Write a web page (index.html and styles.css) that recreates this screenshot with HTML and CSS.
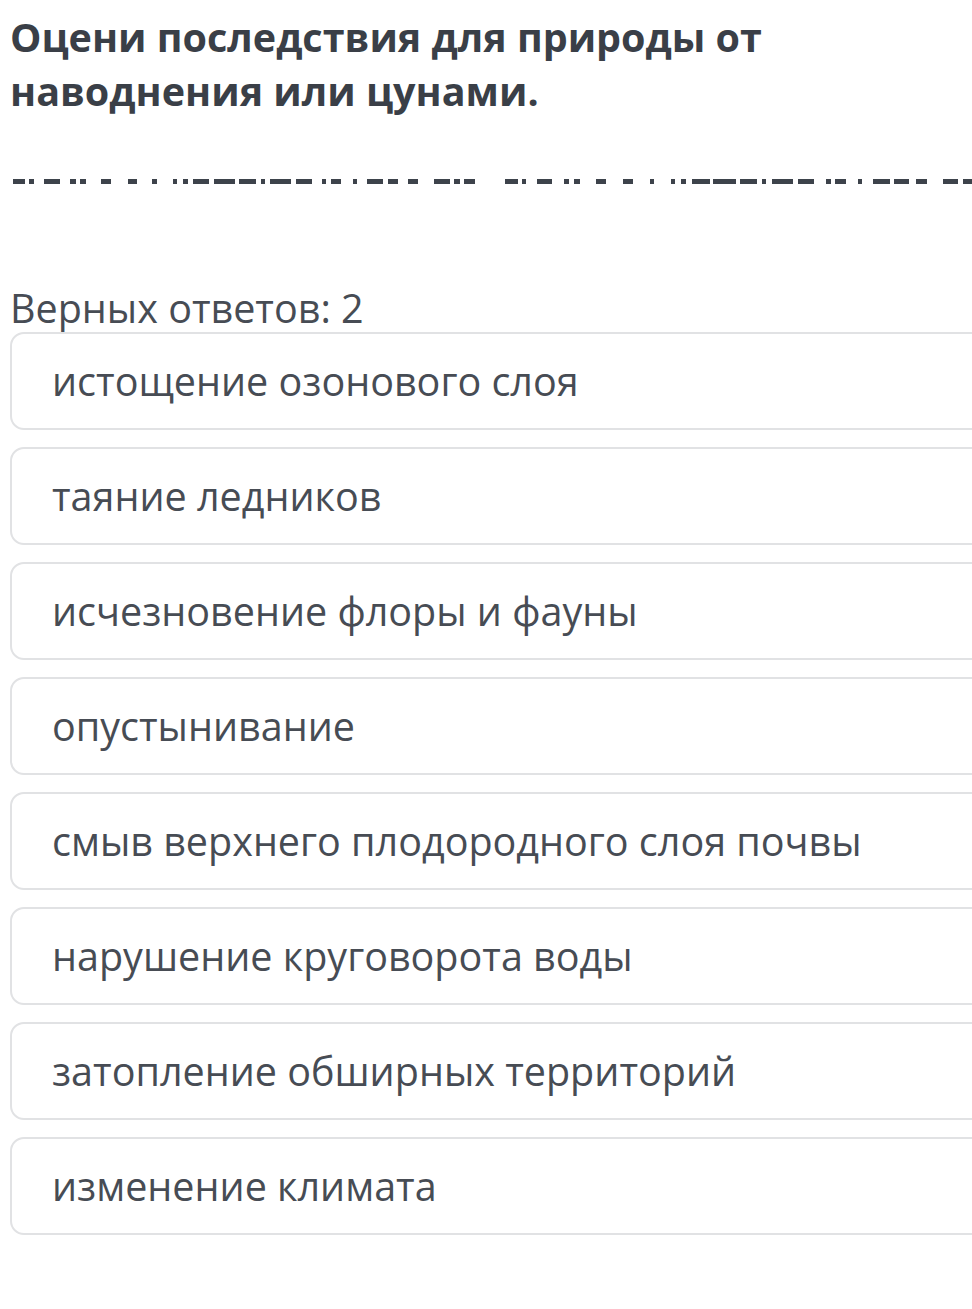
FILE: index.html
```html
<!DOCTYPE html>
<html>
<head>
  <title>Вопрос</title>
  <link rel="stylesheet" href="styles.css">
</head>
<body>
  <div id="question">
    <h1 class="title">Оцени последствия для природы от наводнения или цунами.</h1>

    <div class="blanks">
      <svg width="972" height="8" viewBox="0 0 972 8">
        <g fill="#3d434b">
          <rect x="13" y="1" width="12" height="5"/><rect x="29" y="1" width="5" height="5"/>
          <rect x="44" y="1" width="16" height="5"/><rect x="70" y="1" width="6" height="5"/>
          <rect x="80" y="1" width="6" height="5"/><rect x="101" y="1" width="10" height="5"/>
          <rect x="128" y="1" width="9" height="5"/><rect x="152" y="1" width="5" height="5"/>
          <rect x="173" y="1" width="4" height="5"/><rect x="183" y="1" width="5" height="5"/>
          <rect x="193" y="1" width="16" height="5"/><rect x="214" y="1" width="21" height="5"/>
          <rect x="239" y="1" width="17" height="5"/><rect x="261" y="1" width="4" height="5"/>
          <rect x="270" y="1" width="21" height="5"/><rect x="296" y="1" width="16" height="5"/>
          <rect x="322" y="1" width="4" height="5"/><rect x="331" y="1" width="10" height="5"/>
          <rect x="353" y="1" width="4" height="5"/><rect x="367" y="1" width="16" height="5"/>
          <rect x="388" y="1" width="10" height="5"/><rect x="408" y="1" width="10" height="5"/>
          <rect x="434" y="1" width="16" height="5"/><rect x="454" y="1" width="6" height="5"/>
          <rect x="464" y="1" width="11" height="5"/>

          <rect x="505" y="1" width="13" height="5"/><rect x="522" y="1" width="4" height="5"/>
          <rect x="537" y="1" width="15" height="5"/><rect x="564" y="1" width="5" height="5"/>
          <rect x="574" y="1" width="6" height="5"/><rect x="596" y="1" width="10" height="5"/>
          <rect x="623" y="1" width="10" height="5"/><rect x="650" y="1" width="4" height="5"/>
          <rect x="671" y="1" width="4" height="5"/><rect x="681" y="1" width="5" height="5"/>
          <rect x="692" y="1" width="18" height="5"/><rect x="713" y="1" width="23" height="5"/>
          <rect x="740" y="1" width="17" height="5"/><rect x="762" y="1" width="4" height="5"/>
          <rect x="772" y="1" width="21" height="5"/><rect x="798" y="1" width="16" height="5"/>
          <rect x="826" y="1" width="5" height="5"/><rect x="835" y="1" width="11" height="5"/>
          <rect x="858" y="1" width="4" height="5"/><rect x="873" y="1" width="17" height="5"/>
          <rect x="894" y="1" width="15" height="5"/><rect x="916" y="1" width="11" height="5"/>
          <rect x="943" y="1" width="15" height="5"/><rect x="963" y="1" width="9" height="5"/>
        </g>
      </svg>
    </div>

    <p class="hint">Верных ответов: 2</p>

    <ul class="answers">
      <li class="answer">истощение озонового слоя</li>
      <li class="answer">таяние ледников</li>
      <li class="answer">исчезновение флоры и фауны</li>
      <li class="answer">опустынивание</li>
      <li class="answer">смыв верхнего плодородного слоя почвы</li>
      <li class="answer">нарушение круговорота воды</li>
      <li class="answer">затопление обширных территорий</li>
      <li class="answer">изменение климата</li>
    </ul>
  </div>
</body>
</html>
```

FILE: styles.css
```css
body {
  margin: 0;
  background: #ffffff;
  font-family: "Open Sans", "Noto Sans", sans-serif;
  color: #3d434b;
  overflow: hidden;
}

#question {
  padding: 10px 0 0 10px;
}

.title {
  margin: 0;
  font-size: 39.5px;
  font-weight: 700;
  line-height: 54px;
  color: #3a3f47;
  max-width: 850px;
}

.blanks {
  margin: 60px 0 0 -10px;
  height: 8px;
}

.blanks svg {
  display: block;
}

.hint {
  margin: 98px 0 0 0;
  font-size: 39.5px;
  line-height: 48px;
  color: #474c54;
}

.answers {
  list-style: none;
  margin: 0;
  padding: 0;
  display: flex;
  flex-direction: column;
  gap: 17px;
}

.answer {
  box-sizing: border-box;
  height: 98px;
  width: 1000px;
  border: 2px solid #e1e2e4;
  border-radius: 14px;
  padding: 0 0 0 40px;
  display: flex;
  align-items: center;
  font-size: 39.5px;
  color: #474c54;
}
```
